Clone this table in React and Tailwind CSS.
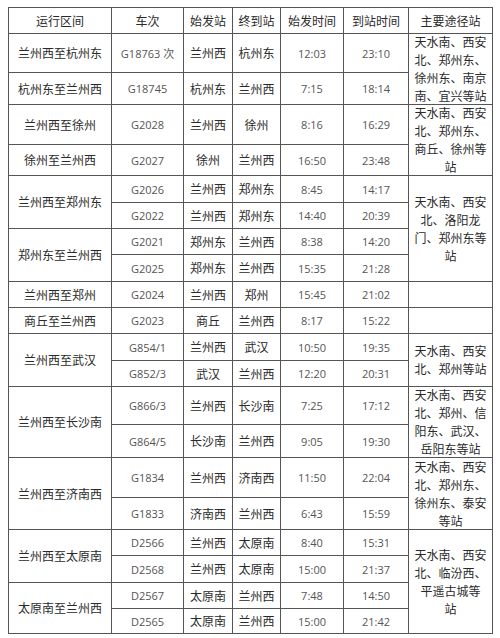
import React from 'react';

const VIA = {
  a: ['天水南、西安', '北、郑州东、', '徐州东、南京', '南、宜兴等站'],
  b: ['天水南、西安', '北、郑州东、', '商丘、徐州等', '站'],
  c: ['天水南、西安', '北、洛阳龙', '门、郑州东等', '站'],
  d: ['天水南、西安', '北、郑州等站'],
  e: ['天水南、西安', '北、郑州、信', '阳东、武汉、', '岳阳东等站'],
  f: ['天水南、西安', '北、郑州东、', '徐州东、泰安', '等站'],
  g: ['天水南、西安', '北、临汾西、', '平遥古城等', '站'],
};

// route: [text, rowSpan] | null (covered), via: [key|'', rowSpan, boxHeight] | null
const rows = [
  { h: 'h-[39px]', route: ['兰州西至杭州东', 1], train: 'G18763 次', from: '兰州西', to: '杭州东', dep: '12:03', arr: '23:10', via: ['a', 2, 'h-[60px]'] },
  { h: 'h-[32px]', route: ['杭州东至兰州西', 1], train: 'G18745', from: '杭州东', to: '兰州西', dep: '7:15', arr: '18:14', via: null },
  { h: 'h-[40px]', route: ['兰州西至徐州', 1], train: 'G2028', from: '兰州西', to: '徐州', dep: '8:16', arr: '16:29', via: ['b', 2, 'h-[60px]'] },
  { h: 'h-[31px]', route: ['徐州至兰州西', 1], train: 'G2027', from: '徐州', to: '兰州西', dep: '16:50', arr: '23:48', via: null },
  { h: 'h-[27px]', route: ['兰州西至郑州东', 2], train: 'G2026', from: '兰州西', to: '郑州东', dep: '8:45', arr: '14:17', via: ['c', 4, 'h-[90px]'] },
  { h: 'h-[26px]', route: null, train: 'G2022', from: '兰州西', to: '郑州东', dep: '14:40', arr: '20:39', via: null },
  { h: 'h-[26px]', route: ['郑州东至兰州西', 2], train: 'G2021', from: '郑州东', to: '兰州西', dep: '8:38', arr: '14:20', via: null },
  { h: 'h-[27px]', route: null, train: 'G2025', from: '郑州东', to: '兰州西', dep: '15:35', arr: '21:28', via: null },
  { h: 'h-[26px]', route: ['兰州西至郑州', 1], train: 'G2024', from: '兰州西', to: '郑州', dep: '15:45', arr: '21:02', via: ['', 1, 'h-[20px]'] },
  { h: 'h-[26px]', route: ['商丘至兰州西', 1], train: 'G2023', from: '商丘', to: '兰州西', dep: '8:17', arr: '15:22', via: ['', 1, 'h-[20px]'] },
  { h: 'h-[27px]', route: ['兰州西至武汉', 2], train: 'G854/1', from: '兰州西', to: '武汉', dep: '10:50', arr: '19:35', via: ['d', 2, 'h-[44px]'] },
  { h: 'h-[26px]', route: null, train: 'G852/3', from: '武汉', to: '兰州西', dep: '12:20', arr: '20:31', via: null },
  { h: 'h-[38px]', route: ['兰州西至长沙南', 2], train: 'G866/3', from: '兰州西', to: '长沙南', dep: '7:25', arr: '17:12', via: ['e', 2, 'h-[60px]'] },
  { h: 'h-[33px]', route: null, train: 'G864/5', from: '长沙南', to: '兰州西', dep: '9:05', arr: '19:30', via: null },
  { h: 'h-[40px]', route: ['兰州西至济南西', 2], train: 'G1834', from: '兰州西', to: '济南西', dep: '11:50', arr: '22:04', via: ['f', 2, 'h-[60px]'] },
  { h: 'h-[32px]', route: null, train: 'G1833', from: '济南西', to: '兰州西', dep: '6:43', arr: '15:59', via: null },
  { h: 'h-[26px]', route: ['兰州西至太原南', 2], train: 'D2566', from: '兰州西', to: '太原南', dep: '8:40', arr: '15:31', via: ['g', 4, 'h-[90px]'] },
  { h: 'h-[27px]', route: null, train: 'D2568', from: '兰州西', to: '太原南', dep: '15:00', arr: '21:37', via: null },
  { h: 'h-[26px]', route: ['太原南至兰州西', 2], train: 'D2567', from: '太原南', to: '兰州西', dep: '7:48', arr: '14:50', via: null },
  { h: 'h-[25px]', route: null, train: 'D2565', from: '太原南', to: '兰州西', dep: '15:00', arr: '21:42', via: null },
];

const cell = 'border border-[#555] p-0 text-center align-middle';
const cjk = "font-['Noto_Sans_CJK_SC',sans-serif] text-[12px] text-[#2a2a2a]";
const num = "font-['Open_Sans','Noto_Sans_CJK_SC',sans-serif] text-[11px] text-[#555]";

export default function App() {
  return (
    <div className="min-h-[638px] w-[500px] bg-white pl-[8px] pt-[7px]">
      <table className="w-[484px] table-fixed border-collapse leading-none">
        <colgroup>
          <col className="w-[103px]" />
          <col className="w-[72px]" />
          <col className="w-[49px]" />
          <col className="w-[48px]" />
          <col className="w-[63px]" />
          <col className="w-[65px]" />
          <col className="w-[84px]" />
        </colgroup>
        <thead>
          <tr className="h-[26px]">
            {['运行区间', '车次', '始发站', '终到站', '始发时间', '到站时间', '主要途径站'].map((t) => (
              <th key={t} className={`${cell} ${cjk} font-normal`}>{t}</th>
            ))}
          </tr>
        </thead>
        <tbody>
          {rows.map((r) => (
            <tr key={r.train} className={r.h}>
              {r.route && (
                <td rowSpan={r.route[1]} className={`${cell} ${cjk}`}>{r.route[0]}</td>
              )}
              <td className={`${cell} ${num}`}>{r.train}</td>
              <td className={`${cell} ${cjk}`}>{r.from}</td>
              <td className={`${cell} ${cjk}`}>{r.to}</td>
              <td className={`${cell} ${num}`}>{r.dep}</td>
              <td className={`${cell} ${num}`}>{r.arr}</td>
              {r.via && (
                <td rowSpan={r.via[1]} className={`${cell} ${cjk}`}>
                  <div className={`flex ${r.via[2]} flex-col items-center justify-center leading-[18px]`}>
                    {(VIA[r.via[0]] || []).map((l, i) => (
                      <span key={i} className="whitespace-nowrap">{l}</span>
                    ))}
                  </div>
                </td>
              )}
            </tr>
          ))}
        </tbody>
      </table>
    </div>
  );
}
